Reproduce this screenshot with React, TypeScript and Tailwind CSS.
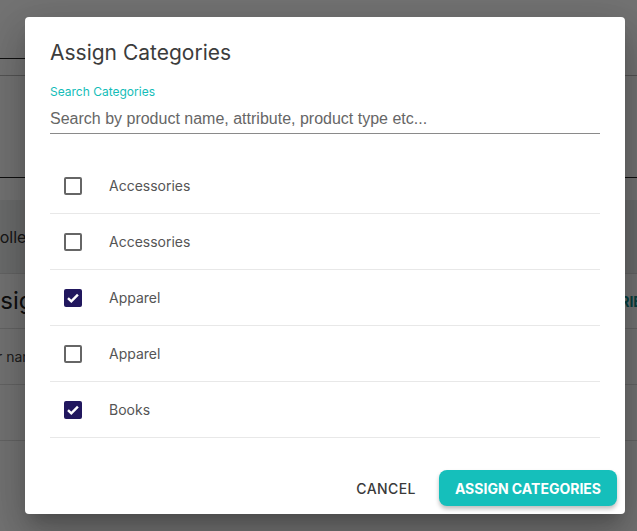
import React, { useState } from 'react';

const inter = "font-['Inter','Noto_Sans',sans-serif]";

const CheckIcon = () => (
  <svg viewBox="0 0 18 18" className="h-[18px] w-[18px]">
    <path d="M4 9.2l3.3 3.2 6.6-6.8" fill="none" stroke="#fff" strokeWidth="2.4" />
  </svg>
);

const Checkbox = ({ checked, onChange }: { checked: boolean; onChange: () => void }) => (
  <button
    onClick={onChange}
    className={
      checked
        ? 'flex h-[18px] w-[18px] items-center justify-center rounded-[2px] bg-[#21175e]'
        : 'h-[18px] w-[18px] rounded-[2px] border-2 border-[#666]'
    }
  >
    {checked && <CheckIcon />}
  </button>
);

const BackgroundPage = () => (
  <div className={`h-[531px] w-full overflow-hidden bg-white ${inter}`}>
    <div className="h-[59px] w-[40px] border-b border-[#222]" />
    <div className="h-[17px] border-b border-[#bbb]" />
    <div className="h-[102px] border-b border-[#222]" />
    <div className="mt-[22px] flex h-[73px] items-center bg-[#eef0f0] text-[16px] text-[#333]">
      <span className="ml-[-12px]">Collections</span>
    </div>
    <div className="flex h-[56px] items-center justify-between whitespace-nowrap border-y border-[#ddd]">
      <span className="ml-[-29px] text-[24px] text-[#222]">Assign</span>
      <span className="mr-[-14px] text-[14px] font-bold text-[#0f8f8c]">CATEGORIES</span>
    </div>
    <div className="flex h-[56px] items-center whitespace-nowrap border-b border-[#ddd] text-[14px] text-[#444]">
      <span className="ml-[-3px]">r name</span>
    </div>
    <div className="h-[56px] border-b border-[#ddd]" />
  </div>
);

export default function App() {
  const [items, setItems] = useState([
    { id: 1, name: 'Accessories', checked: false },
    { id: 2, name: 'Accessories', checked: false },
    { id: 3, name: 'Apparel', checked: true },
    { id: 4, name: 'Apparel', checked: false },
    { id: 5, name: 'Books', checked: true },
  ]);

  const toggle = (id: number) =>
    setItems(items.map((i) => (i.id === id ? { ...i, checked: !i.checked } : i)));

  return (
    <div className="relative h-[531px] w-[637px] overflow-hidden">
      <BackgroundPage />
      <div className="absolute inset-0 bg-black/55" />
      <div
        className={`absolute left-[25px] top-[17px] flex h-[497px] w-[600px] flex-col rounded-[4px] bg-white shadow-[0_11px_15px_-7px_rgba(0,0,0,0.2),0_24px_38px_3px_rgba(0,0,0,0.14),0_9px_46px_8px_rgba(0,0,0,0.12)] ${inter}`}
      >
        <div className="px-[25px] pt-[20px]">
          <h2 className="text-[21px] leading-[32px] text-[#3c3c3c]">Assign Categories</h2>
          <div className="mt-[15px]">
            <label className="block text-[12px] leading-[16px] text-[#14bdb8]">Search Categories</label>
            <input
              className="mt-[8px] h-[26px] w-full border-b border-[#8a8a8a] pb-[4px] font-['Liberation_Sans',Arial,sans-serif] text-[16px] text-[#333] outline-none placeholder:text-[#666]"
              placeholder="Search by product name, attribute, product type etc..."
            />
          </div>
          <div className="mt-[24px]">
            {items.map((item) => (
              <div
                key={item.id}
                className="flex h-[56px] items-center border-b border-[#e8e8e8] pl-[14px]"
              >
                <Checkbox checked={item.checked} onChange={() => toggle(item.id)} />
                <span className="ml-[27px] text-[14px] text-[#555]">{item.name}</span>
              </div>
            ))}
          </div>
        </div>
        <div className="mt-auto flex items-center justify-end gap-[7px] pb-[8px] pr-[8px]">
          <button className="h-[36px] px-[16px] text-[14px] font-medium tracking-[0.4px] text-[#3a3a3a]">
            CANCEL
          </button>
          <button className="h-[36px] rounded-[8px] bg-[#15bfbb] px-[16px] text-[14px] font-bold text-white shadow-[0_3px_4px_rgba(0,0,0,0.25)]">
            ASSIGN CATEGORIES
          </button>
        </div>
      </div>
    </div>
  );
}
